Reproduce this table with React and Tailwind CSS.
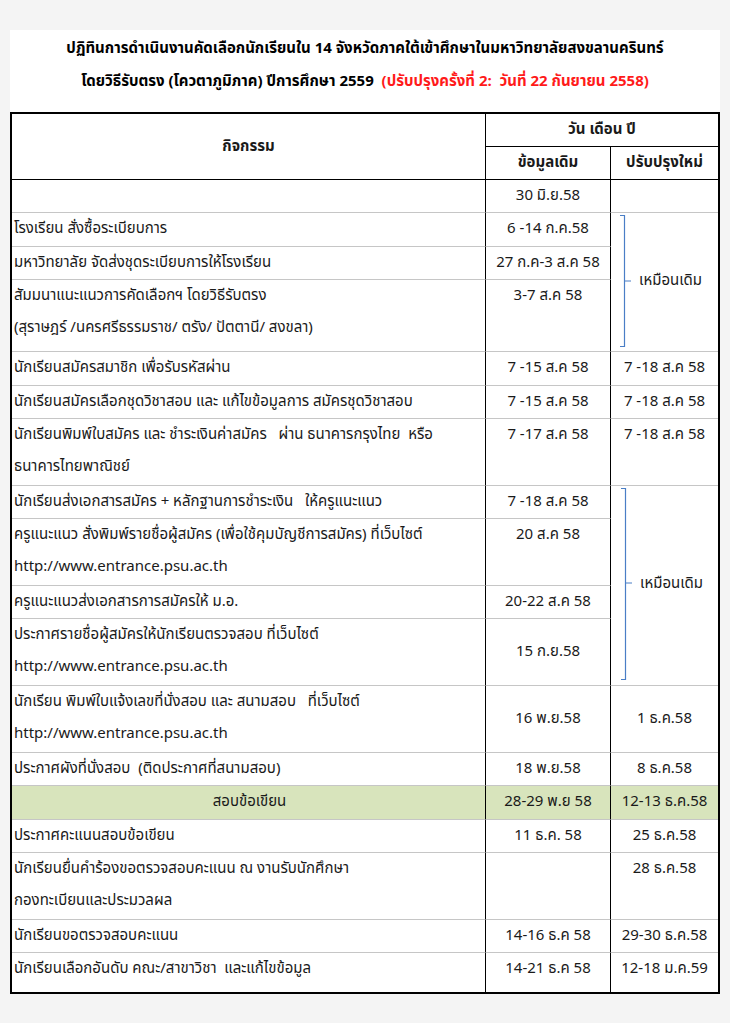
import React from 'react';

const font = "font-['Tahoma','Noto_Sans_Thai','Leelawadee_UI','Noto_Sans',sans-serif]";

function Bracket({ height, mid }) {
    // blue brace drawn like the Word shape in the source document
    return (
        <svg width="18" height={height} className="shrink-0">
            <path
                d={`M5 2.5 H9.5 V${height - 2.5} H5 M9.5 ${mid} H16`}
                fill="none"
                stroke="#4a7ec6"
                strokeWidth="1.2"
            />
        </svg>
    );
}

const A = ({ children, h = 'h-[33px]', center = false, cls = '' }) => (
    <td className={`${h} align-top border-r border-b border-r-black border-b-[#c6c6c6] pl-[2px] ${center ? 'text-center' : 'text-left'} ${cls}`}>
        {children}
    </td>
);

const B = ({ children, mid = false, cls = '' }) => (
    <td className={`${mid ? 'align-middle' : 'align-top'} border-r border-b border-r-black border-b-[#c6c6c6] text-center ${cls}`}>
        {children}
    </td>
);

const C = ({ children, mid = false, rowSpan, cls = '' }) => (
    <td rowSpan={rowSpan} className={`${mid ? 'align-middle' : 'align-top'} border-b border-b-[#c6c6c6] text-center ${cls}`}>
        {children}
    </td>
);

export default function App() {
    return (
        <div className={`min-h-[1023px] bg-[#f4f4f4] pt-[30px] ${font} text-[15px] leading-[32px] text-[#1a1a1a]`}>
            <div className="ml-[10px] w-[710px] bg-white">
                <div className="pt-[2px] text-center font-bold text-[15px] leading-[33px] text-black">
                    <div>ปฏิทินการดำเนินงานคัดเลือกนักเรียนใน 14 จังหวัดภาคใต้เข้าศึกษาในมหาวิทยาลัยสงขลานครินทร์</div>
                    <div>
                        โดยวิธีรับตรง (โควตาภูมิภาค) ปีการศึกษา 2559{' '}
                        <span className="text-[#ff1a1a]">&nbsp;(ปรับปรุงครั้งที่ 2:&nbsp; วันที่ 22 กันยายน 2558)</span>
                    </div>
                </div>

                <table className="mt-[14px] w-[710px] table-fixed border-separate border-spacing-0 border-2 border-black">
                    <colgroup>
                        <col className="w-[474px]" />
                        <col className="w-[125px]" />
                        <col />
                    </colgroup>
                    <tbody>
                        <tr className="h-[33px]">
                            <th rowSpan={2} className="border-r border-b border-black font-bold text-center align-middle">กิจกรรม</th>
                            <th colSpan={2} className="h-[33px] border-b border-black font-bold text-center align-middle">วัน เดือน ปี</th>
                        </tr>
                        <tr className="h-[33px]">
                            <th className="h-[33px] border-r border-b border-black font-bold text-center">ข้อมูลเดิม</th>
                            <th className="border-b border-black font-bold text-center">ปรับปรุงใหม่</th>
                        </tr>

                        <tr>
                            <A></A>
                            <B>30 มิ.ย.58</B>
                            <C></C>
                        </tr>
                        <tr>
                            <A h="h-[34px]">โรงเรียน สั่งซื้อระเบียบการ</A>
                            <B>6 -14 ก.ค.58</B>
                            <C rowSpan={3}>
                                <div className="h-[136px] flex items-center pl-[4px] text-left">
                                    <Bracket height={136} mid={68} />
                                    <span className="ml-[6px]">เหมือนเดิม</span>
                                </div>
                            </C>
                        </tr>
                        <tr>
                            <A>มหาวิทยาลัย จัดส่งชุดระเบียบการให้โรงเรียน</A>
                            <B>27 ก.ค-3 ส.ค 58</B>
                        </tr>
                        <tr>
                            <A h="h-[72px]">
                                <div>สัมมนาแนะแนวการคัดเลือกฯ โดยวิธีรับตรง</div>
                                <div>(สุราษฎร์ /นครศรีธรรมราช/ ตรัง/ ปัตตานี/ สงขลา)</div>
                            </A>
                            <B>3-7 ส.ค 58</B>
                        </tr>
                        <tr>
                            <A h="h-[34px]">นักเรียนสมัครสมาชิก เพื่อรับรหัสผ่าน</A>
                            <B>7 -15 ส.ค 58</B>
                            <C>7 -18 ส.ค 58</C>
                        </tr>
                        <tr>
                            <A>นักเรียนสมัครเลือกชุดวิชาสอบ และ แก้ไขข้อมูลการ สมัครชุดวิชาสอบ</A>
                            <B>7 -15 ส.ค 58</B>
                            <C>7 -18 ส.ค 58</C>
                        </tr>
                        <tr>
                            <A h="h-[67px]">
                                <div>นักเรียนพิมพ์ใบสมัคร และ ชำระเงินค่าสมัคร &nbsp; ผ่าน ธนาคารกรุงไทย &nbsp;หรือ</div>
                                <div>ธนาคารไทยพาณิชย์</div>
                            </A>
                            <B>7 -17 ส.ค 58</B>
                            <C>7 -18 ส.ค 58</C>
                        </tr>
                        <tr>
                            <A>นักเรียนส่งเอกสารสมัคร + หลักฐานการชำระเงิน &nbsp; ให้ครูแนะแนว</A>
                            <B>7 -18 ส.ค 58</B>
                            <C rowSpan={4}>
                                <div className="h-[196px] flex items-center pl-[5px] text-left">
                                    <Bracket height={196} mid={97} />
                                    <span className="ml-[6px]">เหมือนเดิม</span>
                                </div>
                            </C>
                        </tr>
                        <tr>
                            <A h="h-[67px]">
                                <div>ครูแนะแนว สั่งพิมพ์รายชื่อผู้สมัคร (เพื่อใช้คุมบัญชีการสมัคร) ที่เว็บไซต์</div>
                                <div>http://www.entrance.psu.ac.th</div>
                            </A>
                            <B>20 ส.ค 58</B>
                        </tr>
                        <tr>
                            <A>ครูแนะแนวส่งเอกสารการสมัครให้ ม.อ.</A>
                            <B>20-22 ส.ค 58</B>
                        </tr>
                        <tr>
                            <A h="h-[67px]">
                                <div>ประกาศรายชื่อผู้สมัครให้นักเรียนตรวจสอบ ที่เว็บไซต์</div>
                                <div>http://www.entrance.psu.ac.th</div>
                            </A>
                            <B mid>15 ก.ย.58</B>
                        </tr>
                        <tr>
                            <A h="h-[67px]">
                                <div>นักเรียน พิมพ์ใบแจ้งเลขที่นั่งสอบ และ สนามสอบ &nbsp; ที่เว็บไซต์</div>
                                <div>http://www.entrance.psu.ac.th</div>
                            </A>
                            <B mid>16 พ.ย.58</B>
                            <C mid>1 ธ.ค.58</C>
                        </tr>
                        <tr>
                            <A>ประกาศผังที่นั่งสอบ &nbsp;(ติดประกาศที่สนามสอบ)</A>
                            <B>18 พ.ย.58</B>
                            <C>8 ธ.ค.58</C>
                        </tr>
                        <tr className="bg-[#d8e4bc]">
                            <A h="h-[34px]" center>สอบข้อเขียน</A>
                            <B>28-29 พ.ย 58</B>
                            <C>12-13 ธ.ค.58</C>
                        </tr>
                        <tr>
                            <A>ประกาศคะแนนสอบข้อเขียน</A>
                            <B>11 ธ.ค. 58</B>
                            <C>25 ธ.ค.58</C>
                        </tr>
                        <tr>
                            <A h="h-[67px]">
                                <div>นักเรียนยื่นคำร้องขอตรวจสอบคะแนน ณ งานรับนักศึกษา</div>
                                <div>กองทะเบียนและประมวลผล</div>
                            </A>
                            <B></B>
                            <C>28 ธ.ค.58</C>
                        </tr>
                        <tr>
                            <A>นักเรียนขอตรวจสอบคะแนน</A>
                            <B>14-16 ธ.ค 58</B>
                            <C>29-30 ธ.ค.58</C>
                        </tr>
                        <tr>
                            <A h="h-[39px]" cls="border-b-0">นักเรียนเลือกอันดับ คณะ/สาขาวิชา &nbsp;และแก้ไขข้อมูล</A>
                            <B cls="border-b-0">14-21 ธ.ค 58</B>
                            <C cls="border-b-0">12-18 ม.ค.59</C>
                        </tr>
                    </tbody>
                </table>
            </div>
        </div>
    );
}
